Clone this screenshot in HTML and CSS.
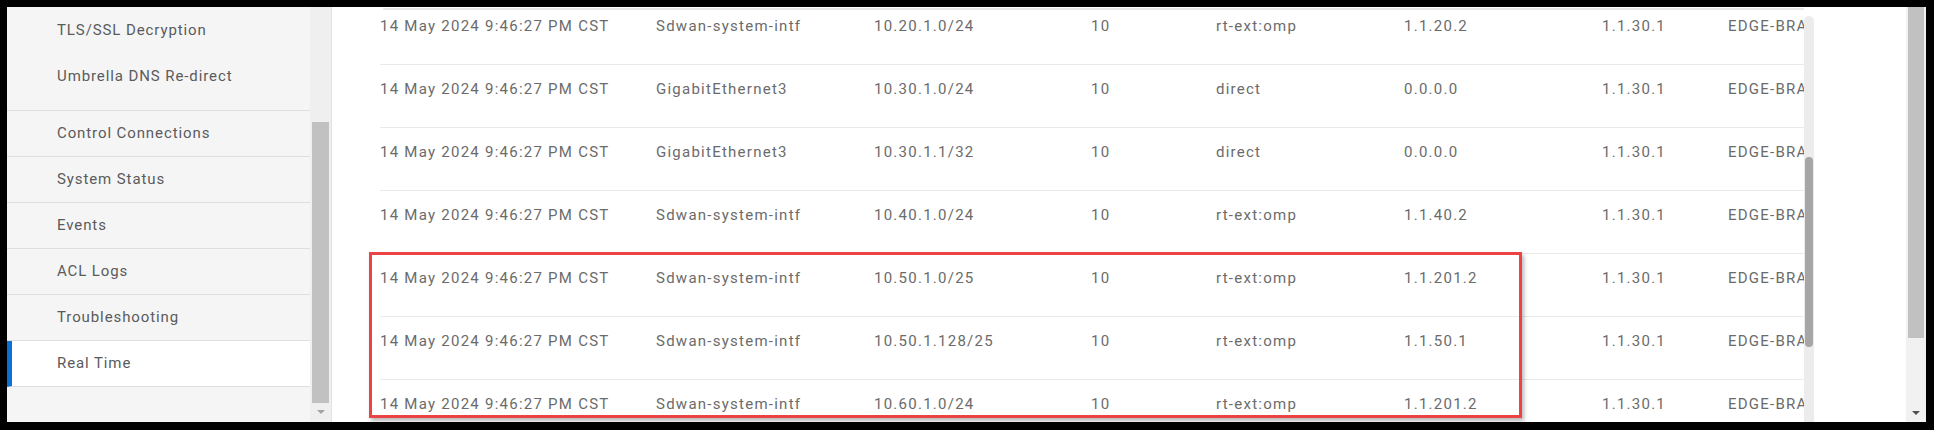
FILE: index.html
```html
<!DOCTYPE html>
<html>
<head>
<meta charset="utf-8">
<link rel="stylesheet" href="styles.css">
</head>
<body>
<div class="frame">
  <aside class="sidebar">
    <nav class="menu">
      <div class="group">
        <div class="item sub">TLS/SSL Decryption</div>
        <div class="item sub">Umbrella DNS Re-direct</div>
      </div>
      <div class="item">Control Connections</div>
      <div class="item">System Status</div>
      <div class="item">Events</div>
      <div class="item">ACL Logs</div>
      <div class="item">Troubleshooting</div>
      <div class="item active">Real Time</div>
    </nav>
  </aside>
  <div class="side-scroll">
    <div class="side-thumb"></div>
    <div class="arrow light"></div>
  </div>
  <main class="main">
    <div class="table-area">
      <table class="routes">
        <colgroup>
          <col class="c1"><col class="c2"><col class="c3"><col class="c4"><col class="c5"><col class="c6"><col class="c7"><col class="c8">
        </colgroup>
        <tbody>
          <tr><td>14 May 2024 9:46:27 PM CST</td><td>Sdwan-system-intf</td><td>10.20.1.0/24</td><td>10</td><td>rt-ext:omp</td><td>1.1.20.2</td><td>1.1.30.1</td><td>EDGE-BRANCH</td></tr>
          <tr><td>14 May 2024 9:46:27 PM CST</td><td>GigabitEthernet3</td><td>10.30.1.0/24</td><td>10</td><td>direct</td><td>0.0.0.0</td><td>1.1.30.1</td><td>EDGE-BRANCH</td></tr>
          <tr><td>14 May 2024 9:46:27 PM CST</td><td>GigabitEthernet3</td><td>10.30.1.1/32</td><td>10</td><td>direct</td><td>0.0.0.0</td><td>1.1.30.1</td><td>EDGE-BRANCH</td></tr>
          <tr><td>14 May 2024 9:46:27 PM CST</td><td>Sdwan-system-intf</td><td>10.40.1.0/24</td><td>10</td><td>rt-ext:omp</td><td>1.1.40.2</td><td>1.1.30.1</td><td>EDGE-BRANCH</td></tr>
          <tr><td>14 May 2024 9:46:27 PM CST</td><td>Sdwan-system-intf</td><td>10.50.1.0/25</td><td>10</td><td>rt-ext:omp</td><td>1.1.201.2</td><td>1.1.30.1</td><td>EDGE-BRANCH</td></tr>
          <tr><td>14 May 2024 9:46:27 PM CST</td><td>Sdwan-system-intf</td><td>10.50.1.128/25</td><td>10</td><td>rt-ext:omp</td><td>1.1.50.1</td><td>1.1.30.1</td><td>EDGE-BRANCH</td></tr>
          <tr><td>14 May 2024 9:46:27 PM CST</td><td>Sdwan-system-intf</td><td>10.60.1.0/24</td><td>10</td><td>rt-ext:omp</td><td>1.1.201.2</td><td>1.1.30.1</td><td>EDGE-BRANCH</td></tr>
        </tbody>
      </table>
      <div class="top-shadow"></div>
    </div>
    <div class="inner-scroll">
      <div class="inner-thumb"></div>
    </div>
    <div class="highlight"></div>
  </main>
  <div class="outer-scroll">
    <div class="outer-thumb"></div>
    <div class="arrow dark"></div>
  </div>
</div>
</body>
</html>
```
FILE: styles.css
```css
html, body {
  margin: 0;
  padding: 0;
  background: #000;
}
body {
  width: 1934px;
  height: 430px;
  overflow: hidden;
  font-family: Roboto, "Liberation Sans", sans-serif;
}
.frame {
  display: flex;
  margin: 7px 8px 0 7px;
  width: 1919px;
  height: 415px;
  background: #fff;
  overflow: hidden;
}

/* sidebar */
.sidebar {
  flex: 0 0 303px;
  background: #f5f5f5;
  overflow: hidden;
}
.menu {
  display: flex;
  flex-direction: column;
}
.group {
  padding-bottom: 11px;
  border-bottom: 1px solid #dedede;
}
.item {
  height: 44px;
  padding-bottom: 1px;
  display: flex;
  align-items: center;
  padding-left: 50px;
  font-size: 15px;
  letter-spacing: 0.9px;
  color: #5a5b5d;
  border-bottom: 1px solid #dedede;
}
.item.sub {
  height: 45px;
  border-bottom: none;
}
.item.active {
  background: #fff;
  border-left: 5px solid #0d6fd0;
  padding-left: 45px;
}

.side-scroll {
  flex: 0 0 21px;
  background: #efefef;
  border-right: 1px solid #e2e2e2;
  display: flex;
  flex-direction: column;
  align-items: center;
}
.side-thumb {
  margin-top: 115px;
  width: 17px;
  height: 281px;
  background: #c1c1c1;
}
.arrow {
  width: 0;
  height: 0;
  border-left: 4px solid transparent;
  border-right: 4px solid transparent;
}
.arrow.light {
  margin-top: 7px;
  border-top: 4px solid #a3a3a3;
}

/* main */
.main {
  position: relative;
  flex: 0 0 1574px;
  display: flex;
  background: #fff;
}
.table-area {
  position: relative;
  flex: 0 0 1424px;
  padding-left: 48px;
  overflow: hidden;
}
.routes {
  table-layout: fixed;
  width: 1548px;
  border-collapse: separate;
  border-spacing: 0;
  margin-top: -5px;
}
.c1 { width: 276px; }
.c2 { width: 218px; }
.c3 { width: 217px; }
.c4 { width: 125px; }
.c5 { width: 188px; }
.c6 { width: 198px; }
.c7 { width: 126px; }
.c8 { width: 200px; }
.routes td {
  padding: 14px 0 28px 0;
  line-height: 20px;
  font-size: 15px;
  letter-spacing: 1.25px;
  color: #6b6b6b;
  white-space: nowrap;
  vertical-align: top;
  border-bottom: 1px solid #e9e9e9;
}
.top-shadow {
  position: absolute;
  left: 51px;
  right: -8px;
  top: 1px;
  height: 2px;
  border-radius: 1px;
  background: #e8e8e8;
}
.inner-scroll {
  flex: 0 0 10px;
  margin-top: 9px;
  border-radius: 5px 5px 0 0;
  background: #ececec;
}
.inner-thumb {
  margin: 141px 0 0 1px;
  width: 8px;
  height: 190px;
  border-radius: 4px;
  background: #a6a6a6;
}
.highlight {
  position: absolute;
  left: 37px;
  top: 245px;
  width: 1147px;
  height: 160px;
  border: 3px solid #ec4345;
  box-shadow: 2px 3px 4px rgba(0, 0, 0, 0.28);
}

/* outer scrollbar */
.outer-scroll {
  flex: 0 0 20px;
  background: #f1f1f1;
  display: flex;
  flex-direction: column;
  align-items: center;
}
.outer-thumb {
  width: 16px;
  height: 331px;
  background: #c1c1c1;
}
.arrow.dark {
  margin-top: 73px;
  border-top: 4px solid #505050;
}
```
